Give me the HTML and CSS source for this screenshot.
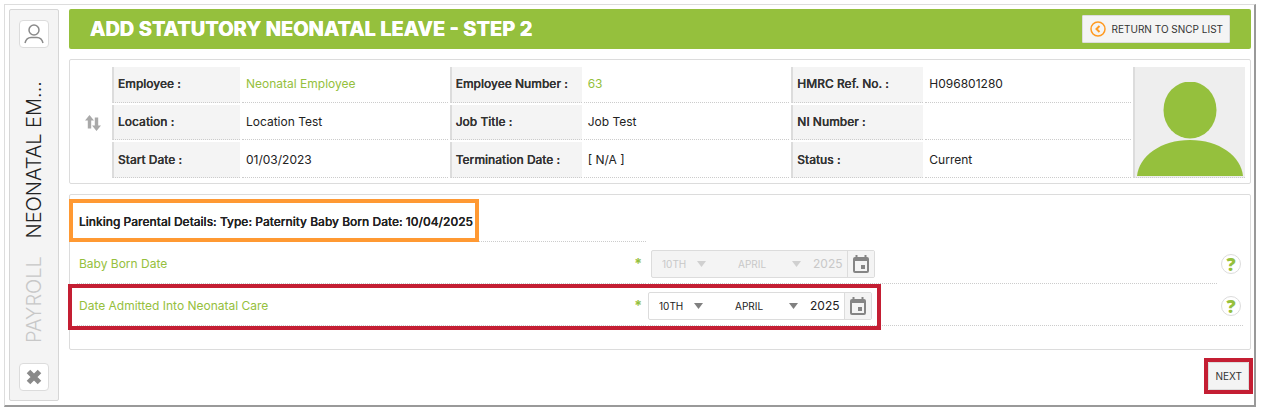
FILE: index.html
```
<!DOCTYPE html>
<html lang="en">
<head>
    <meta charset="UTF-8">
    <meta name="viewport" content="width=device-width, initial-scale=1.0">
    <title>Add Statutory Neonatal Leave</title>
    <link rel="stylesheet" href="styles.css">
</head>
<body>
    <div class="window">
        <aside class="sidebar">
            <button type="button" class="side-btn" aria-label="Employee">
                <svg width="20" height="20" viewBox="0 0 20 20" fill="none" stroke="#8a8a8a" stroke-width="1.5">
                    <circle cx="10" cy="6" r="5"/>
                    <path d="M1 19c1-4 3-5.500 6-5.500h6c3 0 5 1.500 6 5.500"/>
                </svg>
            </button>
            <div class="side-title"><span>PAYROLL</span> NEONATAL EM...</div>
            <button type="button" class="side-btn" aria-label="Close">
                <svg width="16" height="16" viewBox="0 0 16 16" stroke="#8a8a8a" stroke-width="5">
                    <path d="M2.500 2.500l11 11M13.500 2.500l-11 11"/>
                </svg>
            </button>
        </aside>

        <main>
            <header class="title-bar">
                <h1>ADD STATUTORY NEONATAL LEAVE - STEP 2</h1>
                <button type="button" class="btn btn-return">
                    <svg width="16" height="16" viewBox="0 0 16 16" fill="none" stroke="#ff9a22" stroke-width="1.500">
                        <circle cx="8" cy="8" r="7"/>
                        <path d="M9.500 5L6.500 8l3 3" stroke-width="2"/>
                    </svg>
                    RETURN TO SNCP LIST
                </button>
            </header>

            <section class="panel">
                <table class="details">
                    <colgroup>
                        <col class="col-sort">
                        <col class="col-label">
                        <col>
                        <col class="col-label-wide">
                        <col>
                        <col class="col-label-wide">
                        <col>
                        <col class="col-photo">
                    </colgroup>
                    <tr>
                        <td rowspan="3" class="sort">
                            <svg width="16" height="16" viewBox="0 0 16 16" fill="#a9a9a9">
                                <path d="M4.500 0L9 5.500H6.200V13.500H2.800V5.500H0z"/>
                                <path d="M11.500 16L7 10.500h2.800V2.500h3.400v8H16z"/>
                            </svg>
                        </td>
                        <th scope="row">Employee :</th>
                        <td><a href="#">Neonatal Employee</a></td>
                        <th scope="row">Employee Number :</th>
                        <td><a href="#">63</a></td>
                        <th scope="row">HMRC Ref. No. :</th>
                        <td>H096801280</td>
                        <td rowspan="3" class="photo">
                            <svg width="106" height="95" viewBox="0 0 106 95" fill="#95c03d">
                                <ellipse cx="53" cy="28" rx="26.500" ry="28.500"/>
                                <path d="M0 94C2 74 24 58 53 58s51 16 53 36z"/>
                            </svg>
                        </td>
                    </tr>
                    <tr>
                        <th scope="row">Location :</th>
                        <td>Location Test</td>
                        <th scope="row">Job Title :</th>
                        <td>Job Test</td>
                        <th scope="row">NI Number :</th>
                        <td></td>
                    </tr>
                    <tr>
                        <th scope="row">Start Date :</th>
                        <td>01/03/2023</td>
                        <th scope="row">Termination Date :</th>
                        <td>[ N/A ]</td>
                        <th scope="row">Status :</th>
                        <td>Current</td>
                    </tr>
                </table>
            </section>

            <form>
                <section class="panel form-panel">
                    <div class="row">
                        <div class="cell"><strong class="linking">Linking Parental Details: Type: Paternity Baby Born Date: 10/04/2025</strong></div>
                    </div>
                    <div class="row">
                        <div class="cell">
                            <label for="bornDay">Baby Born Date</label>
                            <span class="required">*</span>
                        </div>
                        <div class="cell">
                            <div class="date disabled">
                                <select id="bornDay" class="day" disabled><option>10TH</option></select>
                                <select class="month" aria-label="Born month" disabled><option>APRIL</option></select>
                                <input type="text" class="year" aria-label="Born year" value="2025" disabled>
                                <button type="button" aria-label="Pick born date" disabled>
                                    <svg width="16" height="18" viewBox="0 0 16 18"><path fill="#858585" fill-rule="evenodd" d="M2.500 0h2v2h7V0h2v2H14a2 2 0 0 1 2 2v12a2 2 0 0 1-2 2H2a2 2 0 0 1-2-2V4a2 2 0 0 1 2-2h.5zM2 6v10h12V6zM8 10h4v4H8z"/></svg>
                                </button>
                            </div>
                        </div>
                        <div class="cell help"><button type="button" aria-label="Help">?</button></div>
                    </div>
                    <div class="row">
                        <div class="cell">
                            <label for="admitDay">Date Admitted Into Neonatal Care</label>
                            <span class="required">*</span>
                        </div>
                        <div class="cell">
                            <div class="date">
                                <select id="admitDay" class="day"><option>10TH</option></select>
                                <select class="month" aria-label="Admitted month"><option>APRIL</option></select>
                                <input type="text" class="year" aria-label="Admitted year" value="2025">
                                <button type="button" aria-label="Pick admitted date">
                                    <svg width="16" height="18" viewBox="0 0 16 18"><path fill="#858585" fill-rule="evenodd" d="M2.500 0h2v2h7V0h2v2H14a2 2 0 0 1 2 2v12a2 2 0 0 1-2 2H2a2 2 0 0 1-2-2V4a2 2 0 0 1 2-2h.5zM2 6v10h12V6zM8 10h4v4H8z"/></svg>
                                </button>
                            </div>
                        </div>
                        <div class="cell help last"><button type="button" aria-label="Help">?</button></div>
                        <div class="row-highlight"></div>
                    </div>
                </section>
                <div class="actions">
                    <div class="next-highlight"><button type="submit" class="btn">NEXT</button></div>
                </div>
            </form>
        </main>
    </div>
</body>
</html>
```
FILE: styles.css
```
* {
    box-sizing: border-box;
}
body {
    font-family: Inter, "Liberation Sans", sans-serif;
    font-size: 12px;
    line-height: 16px;
    color: #222;
    background-color: #fff;
    margin: 4px 7px 7px 4px;
}
button,
select,
input {
    font-family: inherit;
    margin: 0;
}
a,
label {
    color: #95c03d;
    text-decoration: none;
}
.window {
    display: flex;
    gap: 10px;
    padding: 4px 3px 4px 4px;
    border: 1px solid #ddd;
    border-right: 2px solid #999;
    border-bottom: 2px solid #999;
    background: #fff;
    box-shadow: 2px 2px 4px #aaa;
}
.sidebar {
    display: flex;
    flex: none;
    flex-direction: column;
    align-items: center;
    justify-content: space-between;
    width: 50px;
    padding: 10px 0 9px;
    border: 1px solid #d6d6d6;
    border-radius: 2px;
    background: #f4f4f4;
}
.side-btn {
    display: flex;
    align-items: center;
    justify-content: center;
    width: 30px;
    height: 28px;
    padding: 0;
    border: 1px solid #dcdcdc;
    border-radius: 4px;
    background: #fff;
}
.side-title {
    writing-mode: vertical-rl;
    transform: rotate(180deg);
    flex: 1;
    padding-top: 20px;
    font-size: 20px;
    font-weight: 300;
    line-height: 28px;
    white-space: nowrap;
}
.side-title span {
    margin-bottom: 12px;
    color: #c8c8c8;
}
main {
    flex: 1;
    min-width: 0;
}
.title-bar {
    display: flex;
    align-items: center;
    justify-content: space-between;
    height: 40px;
    padding: 0 21px;
    border-radius: 2px;
    background: #95c03d;
}
h1 {
    margin: 0;
    font-size: 20px;
    font-weight: 800;
    line-height: 24px;
    color: #fff;
    text-shadow: 0 0 0 #fff;
}
.btn {
    display: flex;
    align-items: center;
    height: 28px;
    padding: 0 6px 0 7px;
    border: 1px solid #dcdcdc;
    border-radius: 1px;
    background: #f4f4f4;
    color: #333;
    font-size: 10px;
    white-space: nowrap;
}
.btn-return {
    gap: 6px;
}
.panel {
    margin-top: 10px;
    border: 1px solid #dcdcdc;
    border-radius: 2px;
}

/* employee details */
.details {
    width: calc(100% - 3px);
    height: 115px;
    margin: 5px 0 3px;
    table-layout: fixed;
    border-spacing: 2px;
}
.col-sort {
    width: 38px;
}
.col-label {
    width: 128px;
}
.col-label-wide {
    width: 132px;
}
.col-photo {
    width: 112px;
}
.details th,
.details td {
    padding: 0 4px;
    border-bottom: 1px dotted #ccc;
    text-align: left;
}
.details th {
    border-left: 2px solid #dcdcdc;
    background: #f4f4f4;
    color: #333;
    font-weight: 500;
    text-shadow: 0 0 0 #333;
}
.details .sort {
    padding: 0 0 0 4px;
    border: none;
    text-align: center;
}
.details .sort svg {
    vertical-align: middle;
}
.details .photo {
    padding: 0;
    border-left: 2px solid #dcdcdc;
    background: #eee;
    text-align: center;
    vertical-align: bottom;
}
.details .photo svg {
    vertical-align: bottom;
}

/* form */
.form-panel {
    padding: 5px 7px 23px;
}
.row {
    position: relative;
    display: grid;
    grid-template-columns: 1fr 1fr 24px;
    grid-template-rows: 42px;
    gap: 2px;
}
.cell {
    display: flex;
    align-items: center;
    justify-content: space-between;
    padding: 2px 4px 0 2px;
    border-bottom: 1px dotted #ccc;
}
.cell + .cell {
    padding: 2px 0 0;
}
.linking {
    margin: -4px 0 -1px -10px;
    padding: 11px 2px 8px 6px;
    border: 4px solid #ff9933;
    font-weight: 500;
    text-shadow: 0 0 0 #222;
    white-space: nowrap;
}
.required {
    color: #95c03d;
    font-size: 14px;
    font-weight: 700;
}
.date {
    display: flex;
    width: 224px;
    height: 28px;
    border: 1px solid #dcdcdc;
    border-radius: 2px;
    background: #fff;
}
.date.disabled {
    margin-left: 3px;
    background: #f4f4f4;
}
.date select,
.date input {
    height: 26px;
    border: none;
    background: transparent;
    color: #222;
    opacity: 1;
}
.date select {
    appearance: none;
    font-size: 10px;
    background: url("data:image/svg+xml,%3Csvg xmlns='http://www.w3.org/2000/svg' width='9' height='6'%3E%3Cpath d='M0 0h9L4.500 6z' fill='%23808080'/%3E%3C/svg%3E") no-repeat right 4px center;
}
.date .day {
    width: 58px;
    padding: 0 10px;
}
.date .month {
    width: 95px;
    padding: 0 28px;
}
.date .year {
    width: 42px;
    padding: 0 0 0 8px;
    font-size: 12px;
}
.date.disabled select,
.date.disabled input {
    color: #c8c8c8;
}
.date.disabled select {
    background-image: url("data:image/svg+xml,%3Csvg xmlns='http://www.w3.org/2000/svg' width='9' height='6'%3E%3Cpath d='M0 0h9L4.500 6z' fill='%23d0d0d0'/%3E%3C/svg%3E");
}
.date button {
    display: flex;
    flex: 1;
    align-items: center;
    justify-content: center;
    padding: 0;
    border: none;
    border-left: 1px solid #dcdcdc;
    background: #f4f4f4;
}
.cell.help {
    justify-content: center;
    border-color: transparent;
}
.cell.last {
    border-color: #ccc;
}
.help button {
    width: 20px;
    height: 20px;
    padding: 0;
    border: 1px solid #dcdcdc;
    border-radius: 50%;
    background: #fff;
    color: #95c03d;
    font-family: "Open Sans", sans-serif;
    font-size: 18px;
    font-weight: 800;
    line-height: 18px;
}
.row-highlight {
    position: absolute;
    top: 0;
    right: calc(50% - 221px);
    bottom: -4px;
    left: -9px;
    border: 4px solid #c41e33;
    pointer-events: none;
}
.actions {
    display: flex;
    justify-content: flex-end;
    margin: 8px -2px 7px 0;
}
.next-highlight {
    border: 4px solid #c41e33;
}
```
